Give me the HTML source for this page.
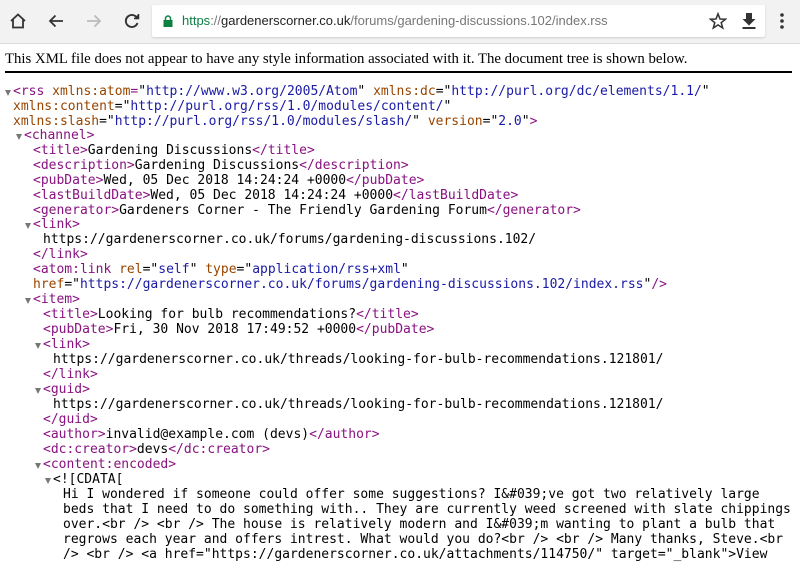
<!DOCTYPE html>
<html><head><meta charset="utf-8"><style>
body{margin:0;width:800px;height:552px;overflow:hidden;background:#fff;position:relative}
.bar{position:absolute;left:0;top:0;width:800px;height:43px;background:#f2f2f2;border-bottom:1px solid #ddd}
.url{position:absolute;left:152px;top:5px;width:613px;height:32px;background:#fff;border-radius:2px;box-shadow:0 1px 2px rgba(0,0,0,.15);font:13px "Liberation Sans",sans-serif;line-height:32px;color:#777}
.url .g{color:#0b8043}.url .b{color:#222}
.hdr{position:absolute;left:5px;top:51px;font:14.8px "Liberation Serif",serif;color:#000;white-space:nowrap}
.hr{position:absolute;left:5px;top:71px;width:787px;height:2px;background:#000}
.l{position:absolute;font:13px "DejaVu Sans Mono","Liberation Mono",monospace;white-space:pre;color:#000;line-height:15px}
.t{color:#881280}.a{color:#994500}.v{color:#1a1aa6}
.tri{position:absolute;width:0;height:0;border-left:3.5px solid transparent;border-right:3.5px solid transparent;border-top:6px solid #777}
</style></head><body>
<div class="bar">
<svg style="position:absolute;left:9px;top:12px" width="18" height="18" viewBox="0 0 18 18"><path d="M2 9 L9 2.5 L16 9 M4 7.5 V15.5 H14 V7.5" fill="none" stroke="#333" stroke-width="1.8"/></svg>
<svg style="position:absolute;left:47px;top:12px" width="18" height="18" viewBox="0 0 18 18"><path d="M16 9 H3 M8.5 3.5 L3 9 L8.5 14.5" fill="none" stroke="#333" stroke-width="1.8"/></svg>
<svg style="position:absolute;left:85px;top:12px" width="18" height="18" viewBox="0 0 18 18"><path d="M2 9 H15 M9.5 3.5 L15 9 L9.5 14.5" fill="none" stroke="#bbb" stroke-width="1.8"/></svg>
<svg style="position:absolute;left:123px;top:12px" width="18" height="18" viewBox="0 0 18 18"><path d="M14.5 7 A6 6 0 1 0 14.5 11" fill="none" stroke="#333" stroke-width="1.9"/><path d="M11 6.5 H15.5 V2" fill="#333" stroke="#333" stroke-width="1.5"/></svg>
<div class="url"><svg style="position:absolute;left:11px;top:10px" width="10" height="12" viewBox="0 0 10 12"><rect x="0.5" y="5" width="9" height="7" fill="#0b8043"/><path d="M2.5 5 V3.5 A2.5 2.5 0 0 1 7.5 3.5 V5" fill="none" stroke="#0b8043" stroke-width="1.5"/></svg><span style="position:absolute;left:30px"><span class="g">https</span>://<span class="b">gardenerscorner.co.uk</span>/forums/gardening-discussions.102/index.rss</span></div>
<svg style="position:absolute;left:709px;top:12px" width="18" height="18" viewBox="0 0 18 18"><path d="M9 1.8 L11 7 L16.5 7.2 L12.2 10.6 L13.7 16 L9 12.9 L4.3 16 L5.8 10.6 L1.5 7.2 L7 7 Z" fill="none" stroke="#333" stroke-width="1.5"/></svg>
<svg style="position:absolute;left:741px;top:12px" width="16" height="18" viewBox="0 0 16 18"><path d="M5 1 H11 V7 H14.5 L8 13.5 L1.5 7 H5 Z" fill="#333"/><rect x="1.5" y="15" width="13" height="2" fill="#333"/></svg>
<svg style="position:absolute;left:779px;top:12px" width="6" height="18" viewBox="0 0 6 18"><circle cx="3" cy="3" r="1.8" fill="#333"/><circle cx="3" cy="9" r="1.8" fill="#333"/><circle cx="3" cy="15" r="1.8" fill="#333"/></svg>
</div>
<div class="hdr">This XML file does not appear to have any style information associated with it. The document tree is shown below.</div>
<div class="hr"></div>

<div class="tri" style="left:5px;top:90px"></div>
<div class="l" style="left:13px;top:84px"><span class="t">&lt;rss</span> <span class="a">xmlns:atom</span><span class="t">=</span>"<span class="v">http://www.w3.org/2005/Atom</span>" <span class="a">xmlns:dc</span>="<span class="v">http://purl.org/dc/elements/1.1/</span>"</div>
<div class="l" style="left:13px;top:99px"><span class="a">xmlns:content</span>="<span class="v">http://purl.org/rss/1.0/modules/content/</span>"</div>
<div class="l" style="left:13px;top:114px"><span class="a">xmlns:slash</span>="<span class="v">http://purl.org/rss/1.0/modules/slash/</span>" <span class="a">version</span>="<span class="v">2.0</span>"<span class="t">&gt;</span></div>
<div class="tri" style="left:16px;top:134px"></div>
<div class="l" style="left:24px;top:128px"><span class="t">&lt;channel&gt;</span></div>
<div class="l" style="left:33px;top:143px"><span class="t">&lt;title&gt;</span>Gardening Discussions<span class="t">&lt;/title&gt;</span></div>
<div class="l" style="left:33px;top:158px"><span class="t">&lt;description&gt;</span>Gardening Discussions<span class="t">&lt;/description&gt;</span></div>
<div class="l" style="left:33px;top:173px"><span class="t">&lt;pubDate&gt;</span>Wed, 05 Dec 2018 14:24:24 +0000<span class="t">&lt;/pubDate&gt;</span></div>
<div class="l" style="left:33px;top:188px"><span class="t">&lt;lastBuildDate&gt;</span>Wed, 05 Dec 2018 14:24:24 +0000<span class="t">&lt;/lastBuildDate&gt;</span></div>
<div class="l" style="left:33px;top:203px"><span class="t">&lt;generator&gt;</span>Gardeners Corner - The Friendly Gardening Forum<span class="t">&lt;/generator&gt;</span></div>
<div class="tri" style="left:25px;top:223px"></div>
<div class="l" style="left:33px;top:217px"><span class="t">&lt;link&gt;</span></div>
<div class="l" style="left:43px;top:232px">https://gardenerscorner.co.uk/forums/gardening-discussions.102/</div>
<div class="l" style="left:33px;top:247px"><span class="t">&lt;/link&gt;</span></div>
<div class="l" style="left:33px;top:262px"><span class="t">&lt;atom:link</span> <span class="a">rel</span>="<span class="v">self</span>" <span class="a">type</span>="<span class="v">application/rss+xml</span>"</div>
<div class="l" style="left:33px;top:277px"><span class="a">href</span>="<span class="v">https://gardenerscorner.co.uk/forums/gardening-discussions.102/index.rss</span>"<span class="t">/&gt;</span></div>
<div class="tri" style="left:25px;top:298px"></div>
<div class="l" style="left:33px;top:292px"><span class="t">&lt;item&gt;</span></div>
<div class="l" style="left:43px;top:307px"><span class="t">&lt;title&gt;</span>Looking for bulb recommendations?<span class="t">&lt;/title&gt;</span></div>
<div class="l" style="left:43px;top:322px"><span class="t">&lt;pubDate&gt;</span>Fri, 30 Nov 2018 17:49:52 +0000<span class="t">&lt;/pubDate&gt;</span></div>
<div class="tri" style="left:35px;top:343px"></div>
<div class="l" style="left:43px;top:337px"><span class="t">&lt;link&gt;</span></div>
<div class="l" style="left:53px;top:352px">https://gardenerscorner.co.uk/threads/looking-for-bulb-recommendations.121801/</div>
<div class="l" style="left:43px;top:367px"><span class="t">&lt;/link&gt;</span></div>
<div class="tri" style="left:35px;top:388px"></div>
<div class="l" style="left:43px;top:382px"><span class="t">&lt;guid&gt;</span></div>
<div class="l" style="left:53px;top:397px">https://gardenerscorner.co.uk/threads/looking-for-bulb-recommendations.121801/</div>
<div class="l" style="left:43px;top:412px"><span class="t">&lt;/guid&gt;</span></div>
<div class="l" style="left:43px;top:427px"><span class="t">&lt;author&gt;</span>invalid@example.com (devs)<span class="t">&lt;/author&gt;</span></div>
<div class="l" style="left:43px;top:442px"><span class="t">&lt;dc:creator&gt;</span>devs<span class="t">&lt;/dc:creator&gt;</span></div>
<div class="tri" style="left:35px;top:463px"></div>
<div class="l" style="left:43px;top:457px"><span class="t">&lt;content:encoded&gt;</span></div>
<div class="tri" style="left:45px;top:478px"></div>
<div class="l" style="left:53px;top:472px">&lt;![CDATA[</div>
<div class="l" style="left:63px;top:487px">Hi I wondered if someone could offer some suggestions? I&amp;#039;ve got two relatively large</div>
<div class="l" style="left:63px;top:502px">beds that I need to do something with.. They are currently weed screened with slate chippings</div>
<div class="l" style="left:63px;top:517px">over.&lt;br /&gt; &lt;br /&gt; The house is relatively modern and I&amp;#039;m wanting to plant a bulb that</div>
<div class="l" style="left:63px;top:532px">regrows each year and offers intrest. What would you do?&lt;br /&gt; &lt;br /&gt; Many thanks, Steve.&lt;br</div>
<div class="l" style="left:63px;top:547px">/&gt; &lt;br /&gt; &lt;a href="https://gardenerscorner.co.uk/attachments/114750/" target="_blank"&gt;View</div>
</body></html>
